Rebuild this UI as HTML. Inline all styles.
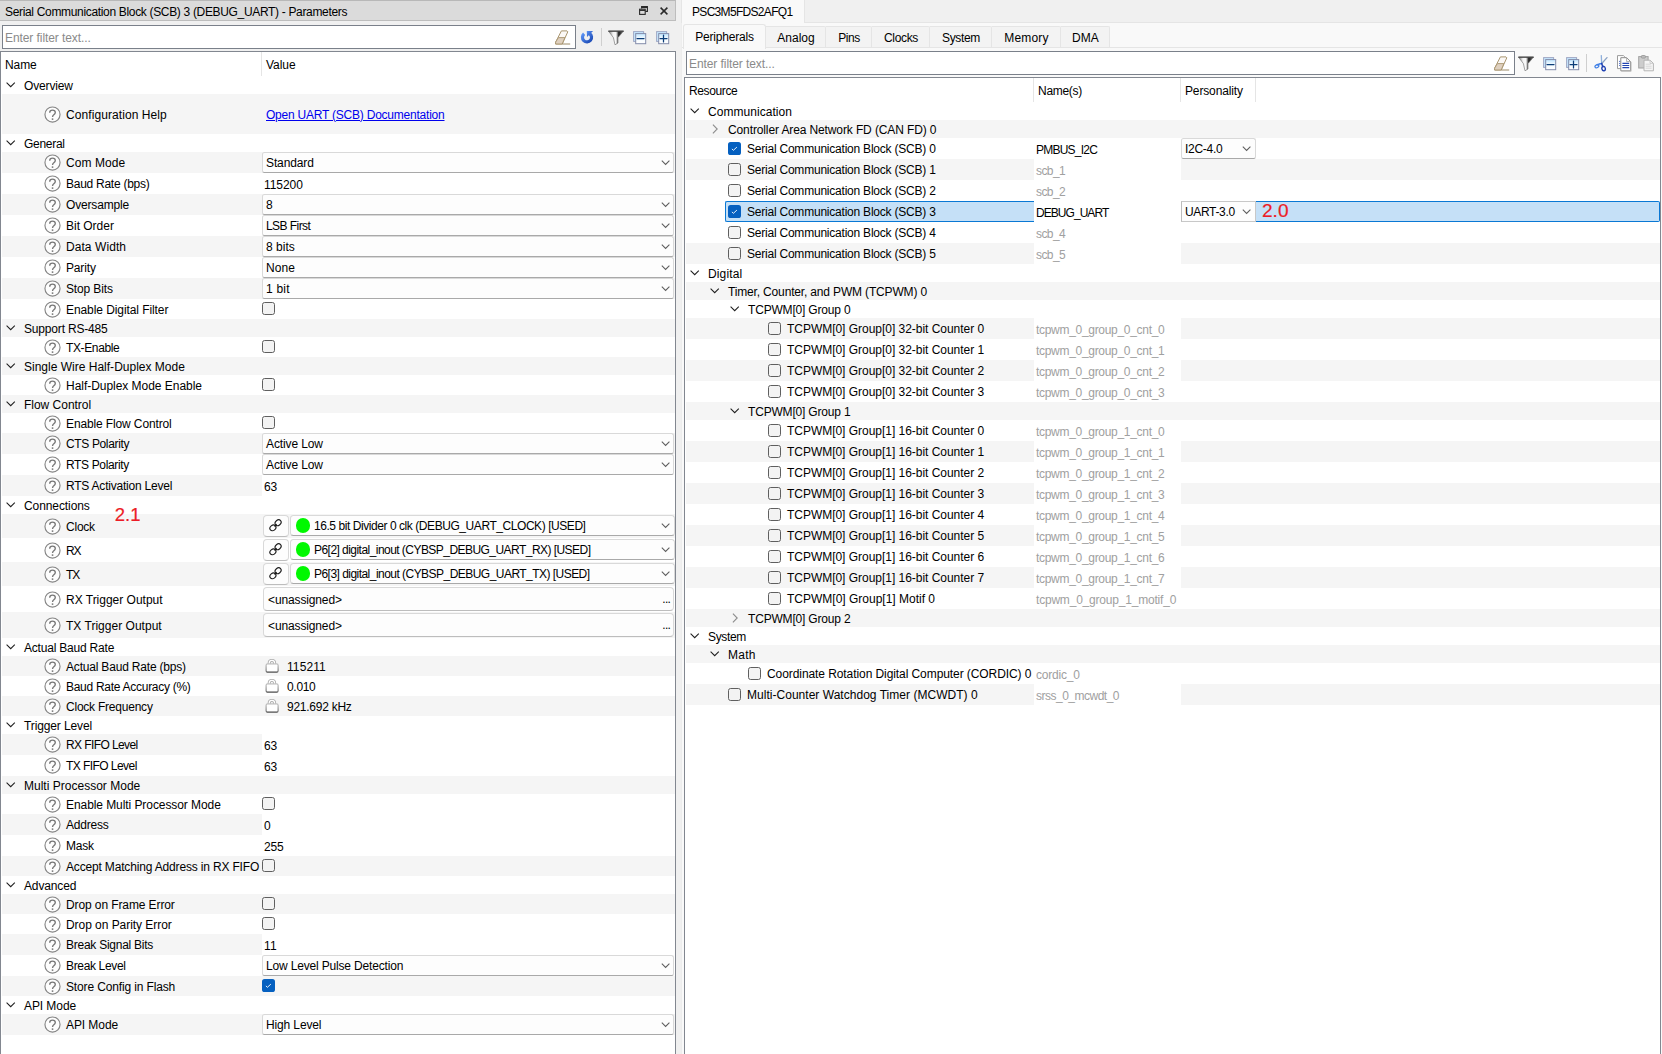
<!DOCTYPE html>
<html><head><meta charset="utf-8"><title>Device Configurator</title>
<style>
html,body{margin:0;padding:0}
body{width:1662px;height:1054px;overflow:hidden;background:#f0f0f0;font-family:"Liberation Sans",sans-serif;font-size:12px;color:#000;position:relative}
div,span,svg,a{position:absolute;box-sizing:border-box}
span span,a span,.t span{position:static}
.t{white-space:nowrap;line-height:16px;height:16px;margin-top:1px}
.g{color:#a0a0a0}
.ann{white-space:nowrap;font-size:18.5px;line-height:22px;height:22px;color:#ec1c26;transform-origin:0 0;-webkit-text-stroke:0.2px #ec1c26}
.ic{display:block}
.row{left:0;right:0}
.combo{background:#fdfdfd;border:1px solid #d9d9d9;border-bottom-color:#a9a9a9;border-radius:2.5px}
.btn{background:#fdfdfd;border:1px solid #d9d9d9;border-bottom-color:#bdbdbd;border-radius:4px}
.tree{background:#fff;border:1px solid #828790;overflow:hidden}
.inp{background:#fff;border:1px solid #7a808a}
.sep{width:1px;background:#e5e5e5}
a{color:#0000ee;text-decoration:underline}
</style></head><body>

<div style="left:0;top:0;width:676px;height:21px;background:#dbdbdb;border:1px solid #bdbdbd;border-top-color:#b8b8b8;border-left:none"></div>
<div class="t" style="left:5px;top:3px"><span style="letter-spacing:-0.329px;">Serial Communication Block (SCB) 3 (DEBUG_UART) - Parameters</span></div>
<svg class="ic" style="left:639px;top:6px" width="9" height="9" viewBox="0 0 9 9"><g fill="none" stroke="#2a2a2a" stroke-width="1.1"><path d="M2.6 2.6 V0.6 H8.4 V5.4 H6.4"/><path d="M2.6 1.5 H8.4"/><rect x="0.6" y="3.2" width="5.6" height="5.2"/><path d="M0.6 4.4 H6.2"/></g></svg>
<svg class="ic" style="left:660px;top:7px" width="8" height="8" viewBox="0 0 8 8"><path d="M0.6 0.6 L7.4 7.4 M7.4 0.6 L0.6 7.4" stroke="#2a2a2a" stroke-width="1.5" fill="none"/></svg>
<div class="inp" style="left:2px;top:25px;width:574px;height:24px"></div>
<div class="t" style="left:5px;top:29px;color:#8a8a8a"><span style="letter-spacing:-0.080px;">Enter filter text...</span></div>
<svg class="ic" style="left:555px;top:29.5px" width="16" height="15" viewBox="0 0 16 15"><path d="M6.4 0.9 H12 L12.8 1.8 L7.2 14 H0.6 V12.2 Z" fill="#fbf8f5" stroke="#a8946e" stroke-width="1"/><path d="M3.4 7.6 H9.9 L7.2 14 H0.6 V12.2 Z" fill="#dfd0bf" stroke="#a8946e" stroke-width="0.9"/><path d="M7.2 14 H15.2" stroke="#9c8a66" stroke-width="1"/></svg>
<svg class="ic" style="left:580px;top:30px" width="14" height="14" viewBox="0 0 14 14"><defs><linearGradient id="rg580" x1="0" y1="0" x2="1" y2="1"><stop offset="0" stop-color="#5b93f4"/><stop offset="1" stop-color="#1a48b4"/></linearGradient></defs><path d="M4.08 3.81 A4.55 4.55 0 1 0 9.61 3.57" fill="none" stroke="url(#rg580)" stroke-width="3.2"/><path d="M6.8 1.1 H13.1 L7.0 6.9 Z" fill="url(#rg580)"/></svg>
<div style="left:601px;top:28px;width:1px;height:18px;background:#cfcfcf"></div>
<svg class="ic" style="left:608px;top:30px" width="16" height="15" viewBox="0 0 16 15"><defs><linearGradient id="fg608" x1="0" x2="1"><stop offset="0" stop-color="#6e6e6e"/><stop offset="0.3" stop-color="#f4f4f4"/><stop offset="0.5" stop-color="#fafafa"/><stop offset="0.68" stop-color="#1e1e1e"/><stop offset="1" stop-color="#777"/></linearGradient></defs><path d="M0.4 1.0 H15.6 L10 7.6 V13 L7 14.8 L5.4 7.6 Z" fill="url(#fg608)" stroke="#6a6a6a" stroke-width="0.6"/><path d="M0.4 1.2 H15.6" stroke="#444" stroke-width="1.2"/></svg>
<svg class="ic" style="left:633px;top:30.6px" width="14" height="14" viewBox="0 0 14 14"><defs><linearGradient id="cg633" x1="0" y1="0" x2="0" y2="1"><stop offset="0" stop-color="#bfe5ff"/><stop offset="0.45" stop-color="#f2faff"/><stop offset="1" stop-color="#ffffff"/></linearGradient></defs><rect x="0.6" y="0.6" width="10" height="9.8" fill="#c6e7ff" stroke="#a0a8c4" stroke-width="1"/><rect x="2.7" y="2.6" width="10" height="10.1" fill="url(#cg633)" stroke="#838cab" stroke-width="1"/><path d="M4 7.5 H11" stroke="#0b3d78" stroke-width="1.25" stroke-linecap="round"/></svg>
<svg class="ic" style="left:656px;top:30.6px" width="14" height="14" viewBox="0 0 14 14"><defs><linearGradient id="cg656" x1="0" y1="0" x2="0" y2="1"><stop offset="0" stop-color="#bfe5ff"/><stop offset="0.45" stop-color="#f2faff"/><stop offset="1" stop-color="#ffffff"/></linearGradient></defs><rect x="0.6" y="0.6" width="10" height="9.8" fill="#c6e7ff" stroke="#a0a8c4" stroke-width="1"/><rect x="2.7" y="2.6" width="10" height="10.1" fill="url(#cg656)" stroke="#838cab" stroke-width="1"/><path d="M4 7.5 H11" stroke="#0b3d78" stroke-width="1.25" stroke-linecap="round"/><path d="M7.5 4.1 V10.9" stroke="#0b3d78" stroke-width="1.25" stroke-linecap="round"/></svg>
<div class="tree" style="left:0;top:51px;width:676px;height:1010px;border-left-color:#828790"></div>
<div class="t" style="left:5px;top:56px"><span style="letter-spacing:-0.082px;">Name</span></div>
<div class="t" style="left:266px;top:56px"><span style="letter-spacing:-0.054px;">Value</span></div>
<div class="sep" style="left:261px;top:52px;height:24px"></div>
<svg class="ic" style="left:6px;top:82.3px" width="10" height="6" viewBox="0 0 10 6"><path d="M0.6 0.6 L4.7 4.7 L8.8 0.6" fill="none" stroke="#1f1f1f" stroke-width="1.05"/></svg>
<div class="t" style="left:24px;top:76.5px"><span style="letter-spacing:-0.146px;">Overview</span></div>
<div style="left:2px;top:94px;width:673px;height:40px;background:#f5f5f5"></div>
<svg class="ic" style="left:43.5px;top:105.5px" width="17" height="17" viewBox="0 0 17 17"><circle cx="8.5" cy="8.5" r="7.55" fill="#fdfdfd" stroke="#858585" stroke-width="1.15"/><path d="M5.7 6.7 C5.7 5.1 6.9 4.15 8.5 4.15 C10.1 4.15 11.3 5.05 11.3 6.45 C11.3 7.55 10.6 8.1 9.8 8.75 C9 9.4 8.55 9.85 8.55 11.1" fill="none" stroke="#787878" stroke-width="1.35"/><circle cx="8.55" cy="13.1" r="0.95" fill="#787878"/></svg>
<div class="t" style="left:66px;top:105.5px"><span style="letter-spacing:0.081px;">Configuration Help</span></div>
<a class="t" style="left:266px;top:105.5px"><span style="letter-spacing:-0.223px;">Open UART (SCB) Documentation</span></a>
<svg class="ic" style="left:6px;top:140.3px" width="10" height="6" viewBox="0 0 10 6"><path d="M0.6 0.6 L4.7 4.7 L8.8 0.6" fill="none" stroke="#1f1f1f" stroke-width="1.05"/></svg>
<div class="t" style="left:24px;top:134.5px"><span style="letter-spacing:-0.277px;">General</span></div>
<div style="left:2px;top:152px;width:673px;height:21px;background:#f5f5f5"></div>
<svg class="ic" style="left:43.5px;top:154.0px" width="17" height="17" viewBox="0 0 17 17"><circle cx="8.5" cy="8.5" r="7.55" fill="#fdfdfd" stroke="#858585" stroke-width="1.15"/><path d="M5.7 6.7 C5.7 5.1 6.9 4.15 8.5 4.15 C10.1 4.15 11.3 5.05 11.3 6.45 C11.3 7.55 10.6 8.1 9.8 8.75 C9 9.4 8.55 9.85 8.55 11.1" fill="none" stroke="#787878" stroke-width="1.35"/><circle cx="8.55" cy="13.1" r="0.95" fill="#787878"/></svg>
<div class="t" style="left:66px;top:154.0px"><span style="letter-spacing:0.065px;">Com Mode</span></div>
<div class="combo" style="left:262px;top:152px;width:412px;height:21px"></div>
<div class="t" style="left:266px;top:154.0px"><span style="letter-spacing:-0.122px;">Standard</span></div>
<svg class="ic" style="left:661.4px;top:160.4px" width="10" height="6" viewBox="0 0 10 6"><path d="M0.8 0.6 L4.6 4.4 L8.4 0.6" fill="none" stroke="#5e5e5e" stroke-width="1.05"/></svg>
<svg class="ic" style="left:43.5px;top:175.0px" width="17" height="17" viewBox="0 0 17 17"><circle cx="8.5" cy="8.5" r="7.55" fill="#fdfdfd" stroke="#858585" stroke-width="1.15"/><path d="M5.7 6.7 C5.7 5.1 6.9 4.15 8.5 4.15 C10.1 4.15 11.3 5.05 11.3 6.45 C11.3 7.55 10.6 8.1 9.8 8.75 C9 9.4 8.55 9.85 8.55 11.1" fill="none" stroke="#787878" stroke-width="1.35"/><circle cx="8.55" cy="13.1" r="0.95" fill="#787878"/></svg>
<div class="t" style="left:66px;top:175.0px"><span style="letter-spacing:-0.261px;">Baud Rate (bps)</span></div>
<div style="left:262px;top:173px;width:413px;height:21px;background:#fff"></div>
<div class="t" style="left:264px;top:176.0px"><span style="letter-spacing:-0.057px;">115200</span></div>
<div style="left:2px;top:194px;width:673px;height:21px;background:#f5f5f5"></div>
<svg class="ic" style="left:43.5px;top:196.0px" width="17" height="17" viewBox="0 0 17 17"><circle cx="8.5" cy="8.5" r="7.55" fill="#fdfdfd" stroke="#858585" stroke-width="1.15"/><path d="M5.7 6.7 C5.7 5.1 6.9 4.15 8.5 4.15 C10.1 4.15 11.3 5.05 11.3 6.45 C11.3 7.55 10.6 8.1 9.8 8.75 C9 9.4 8.55 9.85 8.55 11.1" fill="none" stroke="#787878" stroke-width="1.35"/><circle cx="8.55" cy="13.1" r="0.95" fill="#787878"/></svg>
<div class="t" style="left:66px;top:196.0px"><span style="letter-spacing:-0.169px;">Oversample</span></div>
<div class="combo" style="left:262px;top:194px;width:412px;height:21px"></div>
<div class="t" style="left:266px;top:196.0px"><span style="letter-spacing:-0.206px;">8</span></div>
<svg class="ic" style="left:661.4px;top:202.4px" width="10" height="6" viewBox="0 0 10 6"><path d="M0.8 0.6 L4.6 4.4 L8.4 0.6" fill="none" stroke="#5e5e5e" stroke-width="1.05"/></svg>
<svg class="ic" style="left:43.5px;top:217.0px" width="17" height="17" viewBox="0 0 17 17"><circle cx="8.5" cy="8.5" r="7.55" fill="#fdfdfd" stroke="#858585" stroke-width="1.15"/><path d="M5.7 6.7 C5.7 5.1 6.9 4.15 8.5 4.15 C10.1 4.15 11.3 5.05 11.3 6.45 C11.3 7.55 10.6 8.1 9.8 8.75 C9 9.4 8.55 9.85 8.55 11.1" fill="none" stroke="#787878" stroke-width="1.35"/><circle cx="8.55" cy="13.1" r="0.95" fill="#787878"/></svg>
<div class="t" style="left:66px;top:217.0px"><span style="letter-spacing:-0.016px;">Bit Order</span></div>
<div class="combo" style="left:262px;top:215px;width:412px;height:21px"></div>
<div class="t" style="left:266px;top:217.0px"><span style="letter-spacing:-0.562px;">LSB First</span></div>
<svg class="ic" style="left:661.4px;top:223.4px" width="10" height="6" viewBox="0 0 10 6"><path d="M0.8 0.6 L4.6 4.4 L8.4 0.6" fill="none" stroke="#5e5e5e" stroke-width="1.05"/></svg>
<div style="left:2px;top:236px;width:673px;height:21px;background:#f5f5f5"></div>
<svg class="ic" style="left:43.5px;top:238.0px" width="17" height="17" viewBox="0 0 17 17"><circle cx="8.5" cy="8.5" r="7.55" fill="#fdfdfd" stroke="#858585" stroke-width="1.15"/><path d="M5.7 6.7 C5.7 5.1 6.9 4.15 8.5 4.15 C10.1 4.15 11.3 5.05 11.3 6.45 C11.3 7.55 10.6 8.1 9.8 8.75 C9 9.4 8.55 9.85 8.55 11.1" fill="none" stroke="#787878" stroke-width="1.35"/><circle cx="8.55" cy="13.1" r="0.95" fill="#787878"/></svg>
<div class="t" style="left:66px;top:238.0px"><span style="letter-spacing:0.067px;">Data Width</span></div>
<div class="combo" style="left:262px;top:236px;width:412px;height:21px"></div>
<div class="t" style="left:266px;top:238.0px"><span style="letter-spacing:0.032px;">8 bits</span></div>
<svg class="ic" style="left:661.4px;top:244.4px" width="10" height="6" viewBox="0 0 10 6"><path d="M0.8 0.6 L4.6 4.4 L8.4 0.6" fill="none" stroke="#5e5e5e" stroke-width="1.05"/></svg>
<svg class="ic" style="left:43.5px;top:259.0px" width="17" height="17" viewBox="0 0 17 17"><circle cx="8.5" cy="8.5" r="7.55" fill="#fdfdfd" stroke="#858585" stroke-width="1.15"/><path d="M5.7 6.7 C5.7 5.1 6.9 4.15 8.5 4.15 C10.1 4.15 11.3 5.05 11.3 6.45 C11.3 7.55 10.6 8.1 9.8 8.75 C9 9.4 8.55 9.85 8.55 11.1" fill="none" stroke="#787878" stroke-width="1.35"/><circle cx="8.55" cy="13.1" r="0.95" fill="#787878"/></svg>
<div class="t" style="left:66px;top:259.0px"><span style="letter-spacing:-0.154px;">Parity</span></div>
<div class="combo" style="left:262px;top:257px;width:412px;height:21px"></div>
<div class="t" style="left:266px;top:259.0px"><span style="letter-spacing:0.094px;">None</span></div>
<svg class="ic" style="left:661.4px;top:265.4px" width="10" height="6" viewBox="0 0 10 6"><path d="M0.8 0.6 L4.6 4.4 L8.4 0.6" fill="none" stroke="#5e5e5e" stroke-width="1.05"/></svg>
<div style="left:2px;top:278px;width:673px;height:21px;background:#f5f5f5"></div>
<svg class="ic" style="left:43.5px;top:280.0px" width="17" height="17" viewBox="0 0 17 17"><circle cx="8.5" cy="8.5" r="7.55" fill="#fdfdfd" stroke="#858585" stroke-width="1.15"/><path d="M5.7 6.7 C5.7 5.1 6.9 4.15 8.5 4.15 C10.1 4.15 11.3 5.05 11.3 6.45 C11.3 7.55 10.6 8.1 9.8 8.75 C9 9.4 8.55 9.85 8.55 11.1" fill="none" stroke="#787878" stroke-width="1.35"/><circle cx="8.55" cy="13.1" r="0.95" fill="#787878"/></svg>
<div class="t" style="left:66px;top:280.0px"><span style="letter-spacing:-0.141px;">Stop Bits</span></div>
<div class="combo" style="left:262px;top:278px;width:412px;height:21px"></div>
<div class="t" style="left:266px;top:280.0px"><span style="letter-spacing:0.220px;">1 bit</span></div>
<svg class="ic" style="left:661.4px;top:286.4px" width="10" height="6" viewBox="0 0 10 6"><path d="M0.8 0.6 L4.6 4.4 L8.4 0.6" fill="none" stroke="#5e5e5e" stroke-width="1.05"/></svg>
<svg class="ic" style="left:43.5px;top:300.5px" width="17" height="17" viewBox="0 0 17 17"><circle cx="8.5" cy="8.5" r="7.55" fill="#fdfdfd" stroke="#858585" stroke-width="1.15"/><path d="M5.7 6.7 C5.7 5.1 6.9 4.15 8.5 4.15 C10.1 4.15 11.3 5.05 11.3 6.45 C11.3 7.55 10.6 8.1 9.8 8.75 C9 9.4 8.55 9.85 8.55 11.1" fill="none" stroke="#787878" stroke-width="1.35"/><circle cx="8.55" cy="13.1" r="0.95" fill="#787878"/></svg>
<div class="t" style="left:66px;top:300.5px"><span style="letter-spacing:-0.082px;">Enable Digital Filter</span></div>
<svg class="ic" style="left:262px;top:302.0px" width="13" height="13" viewBox="0 0 13 13"><rect x="0.5" y="0.5" width="12" height="12" rx="2.1" fill="#f3f3f3" stroke="#5f5f5f" stroke-width="1"/></svg>
<div style="left:2px;top:319px;width:673px;height:18px;background:#f5f5f5"></div>
<svg class="ic" style="left:6px;top:325.3px" width="10" height="6" viewBox="0 0 10 6"><path d="M0.6 0.6 L4.7 4.7 L8.8 0.6" fill="none" stroke="#1f1f1f" stroke-width="1.05"/></svg>
<div class="t" style="left:24px;top:319.5px"><span style="letter-spacing:-0.177px;">Support RS-485</span></div>
<svg class="ic" style="left:43.5px;top:338.5px" width="17" height="17" viewBox="0 0 17 17"><circle cx="8.5" cy="8.5" r="7.55" fill="#fdfdfd" stroke="#858585" stroke-width="1.15"/><path d="M5.7 6.7 C5.7 5.1 6.9 4.15 8.5 4.15 C10.1 4.15 11.3 5.05 11.3 6.45 C11.3 7.55 10.6 8.1 9.8 8.75 C9 9.4 8.55 9.85 8.55 11.1" fill="none" stroke="#787878" stroke-width="1.35"/><circle cx="8.55" cy="13.1" r="0.95" fill="#787878"/></svg>
<div class="t" style="left:66px;top:338.5px"><span style="letter-spacing:-0.370px;">TX-Enable</span></div>
<svg class="ic" style="left:262px;top:340.0px" width="13" height="13" viewBox="0 0 13 13"><rect x="0.5" y="0.5" width="12" height="12" rx="2.1" fill="#f3f3f3" stroke="#5f5f5f" stroke-width="1"/></svg>
<div style="left:2px;top:357px;width:673px;height:18px;background:#f5f5f5"></div>
<svg class="ic" style="left:6px;top:363.3px" width="10" height="6" viewBox="0 0 10 6"><path d="M0.6 0.6 L4.7 4.7 L8.8 0.6" fill="none" stroke="#1f1f1f" stroke-width="1.05"/></svg>
<div class="t" style="left:24px;top:357.5px"><span style="letter-spacing:0.006px;">Single Wire Half-Duplex Mode</span></div>
<svg class="ic" style="left:43.5px;top:376.5px" width="17" height="17" viewBox="0 0 17 17"><circle cx="8.5" cy="8.5" r="7.55" fill="#fdfdfd" stroke="#858585" stroke-width="1.15"/><path d="M5.7 6.7 C5.7 5.1 6.9 4.15 8.5 4.15 C10.1 4.15 11.3 5.05 11.3 6.45 C11.3 7.55 10.6 8.1 9.8 8.75 C9 9.4 8.55 9.85 8.55 11.1" fill="none" stroke="#787878" stroke-width="1.35"/><circle cx="8.55" cy="13.1" r="0.95" fill="#787878"/></svg>
<div class="t" style="left:66px;top:376.5px"><span style="letter-spacing:-0.034px;">Half-Duplex Mode Enable</span></div>
<svg class="ic" style="left:262px;top:378.0px" width="13" height="13" viewBox="0 0 13 13"><rect x="0.5" y="0.5" width="12" height="12" rx="2.1" fill="#f3f3f3" stroke="#5f5f5f" stroke-width="1"/></svg>
<div style="left:2px;top:395px;width:673px;height:18px;background:#f5f5f5"></div>
<svg class="ic" style="left:6px;top:401.3px" width="10" height="6" viewBox="0 0 10 6"><path d="M0.6 0.6 L4.7 4.7 L8.8 0.6" fill="none" stroke="#1f1f1f" stroke-width="1.05"/></svg>
<div class="t" style="left:24px;top:395.5px"><span style="letter-spacing:-0.016px;">Flow Control</span></div>
<svg class="ic" style="left:43.5px;top:414.5px" width="17" height="17" viewBox="0 0 17 17"><circle cx="8.5" cy="8.5" r="7.55" fill="#fdfdfd" stroke="#858585" stroke-width="1.15"/><path d="M5.7 6.7 C5.7 5.1 6.9 4.15 8.5 4.15 C10.1 4.15 11.3 5.05 11.3 6.45 C11.3 7.55 10.6 8.1 9.8 8.75 C9 9.4 8.55 9.85 8.55 11.1" fill="none" stroke="#787878" stroke-width="1.35"/><circle cx="8.55" cy="13.1" r="0.95" fill="#787878"/></svg>
<div class="t" style="left:66px;top:414.5px"><span style="letter-spacing:-0.127px;">Enable Flow Control</span></div>
<svg class="ic" style="left:262px;top:416.0px" width="13" height="13" viewBox="0 0 13 13"><rect x="0.5" y="0.5" width="12" height="12" rx="2.1" fill="#f3f3f3" stroke="#5f5f5f" stroke-width="1"/></svg>
<div style="left:2px;top:433px;width:673px;height:21px;background:#f5f5f5"></div>
<svg class="ic" style="left:43.5px;top:435.0px" width="17" height="17" viewBox="0 0 17 17"><circle cx="8.5" cy="8.5" r="7.55" fill="#fdfdfd" stroke="#858585" stroke-width="1.15"/><path d="M5.7 6.7 C5.7 5.1 6.9 4.15 8.5 4.15 C10.1 4.15 11.3 5.05 11.3 6.45 C11.3 7.55 10.6 8.1 9.8 8.75 C9 9.4 8.55 9.85 8.55 11.1" fill="none" stroke="#787878" stroke-width="1.35"/><circle cx="8.55" cy="13.1" r="0.95" fill="#787878"/></svg>
<div class="t" style="left:66px;top:435.0px"><span style="letter-spacing:-0.357px;">CTS Polarity</span></div>
<div class="combo" style="left:262px;top:433px;width:412px;height:21px"></div>
<div class="t" style="left:266px;top:435.0px"><span style="letter-spacing:-0.111px;">Active Low</span></div>
<svg class="ic" style="left:661.4px;top:441.4px" width="10" height="6" viewBox="0 0 10 6"><path d="M0.8 0.6 L4.6 4.4 L8.4 0.6" fill="none" stroke="#5e5e5e" stroke-width="1.05"/></svg>
<svg class="ic" style="left:43.5px;top:456.0px" width="17" height="17" viewBox="0 0 17 17"><circle cx="8.5" cy="8.5" r="7.55" fill="#fdfdfd" stroke="#858585" stroke-width="1.15"/><path d="M5.7 6.7 C5.7 5.1 6.9 4.15 8.5 4.15 C10.1 4.15 11.3 5.05 11.3 6.45 C11.3 7.55 10.6 8.1 9.8 8.75 C9 9.4 8.55 9.85 8.55 11.1" fill="none" stroke="#787878" stroke-width="1.35"/><circle cx="8.55" cy="13.1" r="0.95" fill="#787878"/></svg>
<div class="t" style="left:66px;top:456.0px"><span style="letter-spacing:-0.360px;">RTS Polarity</span></div>
<div class="combo" style="left:262px;top:454px;width:412px;height:21px"></div>
<div class="t" style="left:266px;top:456.0px"><span style="letter-spacing:-0.111px;">Active Low</span></div>
<svg class="ic" style="left:661.4px;top:462.4px" width="10" height="6" viewBox="0 0 10 6"><path d="M0.8 0.6 L4.6 4.4 L8.4 0.6" fill="none" stroke="#5e5e5e" stroke-width="1.05"/></svg>
<div style="left:2px;top:475px;width:673px;height:21px;background:#f5f5f5"></div>
<svg class="ic" style="left:43.5px;top:477.0px" width="17" height="17" viewBox="0 0 17 17"><circle cx="8.5" cy="8.5" r="7.55" fill="#fdfdfd" stroke="#858585" stroke-width="1.15"/><path d="M5.7 6.7 C5.7 5.1 6.9 4.15 8.5 4.15 C10.1 4.15 11.3 5.05 11.3 6.45 C11.3 7.55 10.6 8.1 9.8 8.75 C9 9.4 8.55 9.85 8.55 11.1" fill="none" stroke="#787878" stroke-width="1.35"/><circle cx="8.55" cy="13.1" r="0.95" fill="#787878"/></svg>
<div class="t" style="left:66px;top:477.0px"><span style="letter-spacing:-0.217px;">RTS Activation Level</span></div>
<div style="left:262px;top:475px;width:413px;height:21px;background:#fff"></div>
<div class="t" style="left:264px;top:478.0px"><span style="letter-spacing:-0.206px;">63</span></div>
<svg class="ic" style="left:6px;top:502.3px" width="10" height="6" viewBox="0 0 10 6"><path d="M0.6 0.6 L4.7 4.7 L8.8 0.6" fill="none" stroke="#1f1f1f" stroke-width="1.05"/></svg>
<div class="t" style="left:24px;top:496.5px"><span style="letter-spacing:-0.091px;">Connections</span></div>
<div style="left:2px;top:514px;width:673px;height:24px;background:#f5f5f5"></div>
<svg class="ic" style="left:43.5px;top:517.5px" width="17" height="17" viewBox="0 0 17 17"><circle cx="8.5" cy="8.5" r="7.55" fill="#fdfdfd" stroke="#858585" stroke-width="1.15"/><path d="M5.7 6.7 C5.7 5.1 6.9 4.15 8.5 4.15 C10.1 4.15 11.3 5.05 11.3 6.45 C11.3 7.55 10.6 8.1 9.8 8.75 C9 9.4 8.55 9.85 8.55 11.1" fill="none" stroke="#787878" stroke-width="1.35"/><circle cx="8.55" cy="13.1" r="0.95" fill="#787878"/></svg>
<div class="t" style="left:66px;top:517.5px"><span style="letter-spacing:-0.227px;">Clock</span></div>
<div class="btn" style="left:263px;top:515px;width:26px;height:22px"></div>
<svg class="ic" style="left:268.6px;top:519.1px" width="13" height="13" viewBox="0 0 13 13"><g fill="none" stroke="#1c1c1c" stroke-width="1.15"><ellipse cx="9.1" cy="3.7" rx="3.2" ry="2.6" transform="rotate(-40 9.1 3.7)"/><ellipse cx="3.9" cy="8.9" rx="3.2" ry="2.6" transform="rotate(-40 3.9 8.9)"/><path d="M5.4 7.4 L7.6 5.2"/></g></svg>
<div class="combo" style="left:290px;top:515px;width:385px;height:21px;border-radius:3.5px"></div>
<div style="left:295.6px;top:517.9px;width:14.9px;height:14.9px;border-radius:8px;background:#00f800"></div>
<div class="t" style="left:314px;top:516.5px"><span style="letter-spacing:-0.438px;">16.5 bit Divider 0 clk (DEBUG_UART_CLOCK) [USED]</span></div>
<svg class="ic" style="left:661.4px;top:523.4px" width="10" height="6" viewBox="0 0 10 6"><path d="M0.8 0.6 L4.6 4.4 L8.4 0.6" fill="none" stroke="#5e5e5e" stroke-width="1.05"/></svg>
<svg class="ic" style="left:43.5px;top:541.5px" width="17" height="17" viewBox="0 0 17 17"><circle cx="8.5" cy="8.5" r="7.55" fill="#fdfdfd" stroke="#858585" stroke-width="1.15"/><path d="M5.7 6.7 C5.7 5.1 6.9 4.15 8.5 4.15 C10.1 4.15 11.3 5.05 11.3 6.45 C11.3 7.55 10.6 8.1 9.8 8.75 C9 9.4 8.55 9.85 8.55 11.1" fill="none" stroke="#787878" stroke-width="1.35"/><circle cx="8.55" cy="13.1" r="0.95" fill="#787878"/></svg>
<div class="t" style="left:66px;top:541.5px"><span style="letter-spacing:-1.207px;">RX</span></div>
<div class="btn" style="left:263px;top:539px;width:26px;height:22px"></div>
<svg class="ic" style="left:268.6px;top:543.1px" width="13" height="13" viewBox="0 0 13 13"><g fill="none" stroke="#1c1c1c" stroke-width="1.15"><ellipse cx="9.1" cy="3.7" rx="3.2" ry="2.6" transform="rotate(-40 9.1 3.7)"/><ellipse cx="3.9" cy="8.9" rx="3.2" ry="2.6" transform="rotate(-40 3.9 8.9)"/><path d="M5.4 7.4 L7.6 5.2"/></g></svg>
<div class="combo" style="left:290px;top:539px;width:385px;height:21px;border-radius:3.5px"></div>
<div style="left:295.6px;top:541.9px;width:14.9px;height:14.9px;border-radius:8px;background:#00f800"></div>
<div class="t" style="left:314px;top:540.5px"><span style="letter-spacing:-0.544px;">P6[2] digital_inout (CYBSP_DEBUG_UART_RX) [USED]</span></div>
<svg class="ic" style="left:661.4px;top:547.4px" width="10" height="6" viewBox="0 0 10 6"><path d="M0.8 0.6 L4.6 4.4 L8.4 0.6" fill="none" stroke="#5e5e5e" stroke-width="1.05"/></svg>
<div style="left:2px;top:562px;width:673px;height:24px;background:#f5f5f5"></div>
<svg class="ic" style="left:43.5px;top:565.5px" width="17" height="17" viewBox="0 0 17 17"><circle cx="8.5" cy="8.5" r="7.55" fill="#fdfdfd" stroke="#858585" stroke-width="1.15"/><path d="M5.7 6.7 C5.7 5.1 6.9 4.15 8.5 4.15 C10.1 4.15 11.3 5.05 11.3 6.45 C11.3 7.55 10.6 8.1 9.8 8.75 C9 9.4 8.55 9.85 8.55 11.1" fill="none" stroke="#787878" stroke-width="1.35"/><circle cx="8.55" cy="13.1" r="0.95" fill="#787878"/></svg>
<div class="t" style="left:66px;top:565.5px"><span style="letter-spacing:-0.983px;">TX</span></div>
<div class="btn" style="left:263px;top:563px;width:26px;height:22px"></div>
<svg class="ic" style="left:268.6px;top:567.1px" width="13" height="13" viewBox="0 0 13 13"><g fill="none" stroke="#1c1c1c" stroke-width="1.15"><ellipse cx="9.1" cy="3.7" rx="3.2" ry="2.6" transform="rotate(-40 9.1 3.7)"/><ellipse cx="3.9" cy="8.9" rx="3.2" ry="2.6" transform="rotate(-40 3.9 8.9)"/><path d="M5.4 7.4 L7.6 5.2"/></g></svg>
<div class="combo" style="left:290px;top:563px;width:385px;height:21px;border-radius:3.5px"></div>
<div style="left:295.6px;top:565.9px;width:14.9px;height:14.9px;border-radius:8px;background:#00f800"></div>
<div class="t" style="left:314px;top:564.5px"><span style="letter-spacing:-0.535px;">P6[3] digital_inout (CYBSP_DEBUG_UART_TX) [USED]</span></div>
<svg class="ic" style="left:661.4px;top:571.4px" width="10" height="6" viewBox="0 0 10 6"><path d="M0.8 0.6 L4.6 4.4 L8.4 0.6" fill="none" stroke="#5e5e5e" stroke-width="1.05"/></svg>
<svg class="ic" style="left:43.5px;top:590.5px" width="17" height="17" viewBox="0 0 17 17"><circle cx="8.5" cy="8.5" r="7.55" fill="#fdfdfd" stroke="#858585" stroke-width="1.15"/><path d="M5.7 6.7 C5.7 5.1 6.9 4.15 8.5 4.15 C10.1 4.15 11.3 5.05 11.3 6.45 C11.3 7.55 10.6 8.1 9.8 8.75 C9 9.4 8.55 9.85 8.55 11.1" fill="none" stroke="#787878" stroke-width="1.35"/><circle cx="8.55" cy="13.1" r="0.95" fill="#787878"/></svg>
<div class="t" style="left:66px;top:590.5px"><span style="letter-spacing:-0.009px;">RX Trigger Output</span></div>
<div class="btn" style="left:263px;top:587px;width:411px;height:24px"></div>
<div class="t" style="left:268px;top:590.5px"><span style="letter-spacing:-0.130px;">&lt;unassigned&gt;</span></div>
<div class="t" style="left:662.3px;top:590.2px"><span style="letter-spacing:-0.730px;">...</span></div>
<div style="left:2px;top:612px;width:673px;height:26px;background:#f5f5f5"></div>
<svg class="ic" style="left:43.5px;top:616.5px" width="17" height="17" viewBox="0 0 17 17"><circle cx="8.5" cy="8.5" r="7.55" fill="#fdfdfd" stroke="#858585" stroke-width="1.15"/><path d="M5.7 6.7 C5.7 5.1 6.9 4.15 8.5 4.15 C10.1 4.15 11.3 5.05 11.3 6.45 C11.3 7.55 10.6 8.1 9.8 8.75 C9 9.4 8.55 9.85 8.55 11.1" fill="none" stroke="#787878" stroke-width="1.35"/><circle cx="8.55" cy="13.1" r="0.95" fill="#787878"/></svg>
<div class="t" style="left:66px;top:616.5px"><span style="letter-spacing:0.018px;">TX Trigger Output</span></div>
<div class="btn" style="left:263px;top:613px;width:411px;height:24px"></div>
<div class="t" style="left:268px;top:616.5px"><span style="letter-spacing:-0.130px;">&lt;unassigned&gt;</span></div>
<div class="t" style="left:662.3px;top:616.2px"><span style="letter-spacing:-0.730px;">...</span></div>
<svg class="ic" style="left:6px;top:644.3px" width="10" height="6" viewBox="0 0 10 6"><path d="M0.6 0.6 L4.7 4.7 L8.8 0.6" fill="none" stroke="#1f1f1f" stroke-width="1.05"/></svg>
<div class="t" style="left:24px;top:638.5px"><span style="letter-spacing:-0.202px;">Actual Baud Rate</span></div>
<div style="left:2px;top:656px;width:673px;height:20px;background:#f5f5f5"></div>
<svg class="ic" style="left:43.5px;top:657.5px" width="17" height="17" viewBox="0 0 17 17"><circle cx="8.5" cy="8.5" r="7.55" fill="#fdfdfd" stroke="#858585" stroke-width="1.15"/><path d="M5.7 6.7 C5.7 5.1 6.9 4.15 8.5 4.15 C10.1 4.15 11.3 5.05 11.3 6.45 C11.3 7.55 10.6 8.1 9.8 8.75 C9 9.4 8.55 9.85 8.55 11.1" fill="none" stroke="#787878" stroke-width="1.35"/><circle cx="8.55" cy="13.1" r="0.95" fill="#787878"/></svg>
<div class="t" style="left:66px;top:657.5px"><span style="letter-spacing:-0.189px;">Actual Baud Rate (bps)</span></div>
<svg class="ic" style="left:265.3px;top:658.2px" width="14" height="15" viewBox="0 0 14 15"><defs><linearGradient id="lk665" x1="0" y1="0" x2="0" y2="1"><stop offset="0" stop-color="#c2c2c2"/><stop offset="1" stop-color="#6a6a6a"/></linearGradient></defs><path d="M4.2 6 V4.9 C4.2 3.3 5.3 2.4 6.9 2.4 C8.5 2.4 9.6 3.3 9.6 4.9 V6" fill="none" stroke="#a9a9a9" stroke-width="3"/><path d="M4.2 6.4 V4.9 C4.2 3.3 5.3 2.4 6.9 2.4 C8.5 2.4 9.6 3.3 9.6 4.9 V6.4" fill="none" stroke="#fff" stroke-width="1.3"/><rect x="1.1" y="5.9" width="12" height="8.2" rx="1.3" fill="#fff" stroke="url(#lk665)" stroke-width="1.1"/><path d="M1.6 14.2 H12.4" stroke="#6e6e6e" stroke-width="0.9"/></svg>
<div class="t" style="left:287px;top:658.0px"><span style="letter-spacing:0.091px;">115211</span></div>
<svg class="ic" style="left:43.5px;top:677.5px" width="17" height="17" viewBox="0 0 17 17"><circle cx="8.5" cy="8.5" r="7.55" fill="#fdfdfd" stroke="#858585" stroke-width="1.15"/><path d="M5.7 6.7 C5.7 5.1 6.9 4.15 8.5 4.15 C10.1 4.15 11.3 5.05 11.3 6.45 C11.3 7.55 10.6 8.1 9.8 8.75 C9 9.4 8.55 9.85 8.55 11.1" fill="none" stroke="#787878" stroke-width="1.35"/><circle cx="8.55" cy="13.1" r="0.95" fill="#787878"/></svg>
<div class="t" style="left:66px;top:677.5px"><span style="letter-spacing:-0.279px;">Baud Rate Accuracy (%)</span></div>
<svg class="ic" style="left:265.3px;top:678.2px" width="14" height="15" viewBox="0 0 14 15"><defs><linearGradient id="lk685" x1="0" y1="0" x2="0" y2="1"><stop offset="0" stop-color="#c2c2c2"/><stop offset="1" stop-color="#6a6a6a"/></linearGradient></defs><path d="M4.2 6 V4.9 C4.2 3.3 5.3 2.4 6.9 2.4 C8.5 2.4 9.6 3.3 9.6 4.9 V6" fill="none" stroke="#a9a9a9" stroke-width="3"/><path d="M4.2 6.4 V4.9 C4.2 3.3 5.3 2.4 6.9 2.4 C8.5 2.4 9.6 3.3 9.6 4.9 V6.4" fill="none" stroke="#fff" stroke-width="1.3"/><rect x="1.1" y="5.9" width="12" height="8.2" rx="1.3" fill="#fff" stroke="url(#lk685)" stroke-width="1.1"/><path d="M1.6 14.2 H12.4" stroke="#6e6e6e" stroke-width="0.9"/></svg>
<div class="t" style="left:287px;top:678.0px"><span style="letter-spacing:-0.311px;">0.010</span></div>
<div style="left:2px;top:696px;width:673px;height:20px;background:#f5f5f5"></div>
<svg class="ic" style="left:43.5px;top:697.5px" width="17" height="17" viewBox="0 0 17 17"><circle cx="8.5" cy="8.5" r="7.55" fill="#fdfdfd" stroke="#858585" stroke-width="1.15"/><path d="M5.7 6.7 C5.7 5.1 6.9 4.15 8.5 4.15 C10.1 4.15 11.3 5.05 11.3 6.45 C11.3 7.55 10.6 8.1 9.8 8.75 C9 9.4 8.55 9.85 8.55 11.1" fill="none" stroke="#787878" stroke-width="1.35"/><circle cx="8.55" cy="13.1" r="0.95" fill="#787878"/></svg>
<div class="t" style="left:66px;top:697.5px"><span style="letter-spacing:-0.224px;">Clock Frequency</span></div>
<svg class="ic" style="left:265.3px;top:698.2px" width="14" height="15" viewBox="0 0 14 15"><defs><linearGradient id="lk705" x1="0" y1="0" x2="0" y2="1"><stop offset="0" stop-color="#c2c2c2"/><stop offset="1" stop-color="#6a6a6a"/></linearGradient></defs><path d="M4.2 6 V4.9 C4.2 3.3 5.3 2.4 6.9 2.4 C8.5 2.4 9.6 3.3 9.6 4.9 V6" fill="none" stroke="#a9a9a9" stroke-width="3"/><path d="M4.2 6.4 V4.9 C4.2 3.3 5.3 2.4 6.9 2.4 C8.5 2.4 9.6 3.3 9.6 4.9 V6.4" fill="none" stroke="#fff" stroke-width="1.3"/><rect x="1.1" y="5.9" width="12" height="8.2" rx="1.3" fill="#fff" stroke="url(#lk705)" stroke-width="1.1"/><path d="M1.6 14.2 H12.4" stroke="#6e6e6e" stroke-width="0.9"/></svg>
<div class="t" style="left:287px;top:698.0px"><span style="letter-spacing:-0.251px;">921.692 kHz</span></div>
<svg class="ic" style="left:6px;top:722.3px" width="10" height="6" viewBox="0 0 10 6"><path d="M0.6 0.6 L4.7 4.7 L8.8 0.6" fill="none" stroke="#1f1f1f" stroke-width="1.05"/></svg>
<div class="t" style="left:24px;top:716.5px"><span style="letter-spacing:-0.116px;">Trigger Level</span></div>
<div style="left:2px;top:734px;width:673px;height:21px;background:#f5f5f5"></div>
<svg class="ic" style="left:43.5px;top:736.0px" width="17" height="17" viewBox="0 0 17 17"><circle cx="8.5" cy="8.5" r="7.55" fill="#fdfdfd" stroke="#858585" stroke-width="1.15"/><path d="M5.7 6.7 C5.7 5.1 6.9 4.15 8.5 4.15 C10.1 4.15 11.3 5.05 11.3 6.45 C11.3 7.55 10.6 8.1 9.8 8.75 C9 9.4 8.55 9.85 8.55 11.1" fill="none" stroke="#787878" stroke-width="1.35"/><circle cx="8.55" cy="13.1" r="0.95" fill="#787878"/></svg>
<div class="t" style="left:66px;top:736.0px"><span style="letter-spacing:-0.593px;">RX FIFO Level</span></div>
<div style="left:262px;top:734px;width:413px;height:21px;background:#fff"></div>
<div class="t" style="left:264px;top:737.0px"><span style="letter-spacing:-0.206px;">63</span></div>
<svg class="ic" style="left:43.5px;top:757.0px" width="17" height="17" viewBox="0 0 17 17"><circle cx="8.5" cy="8.5" r="7.55" fill="#fdfdfd" stroke="#858585" stroke-width="1.15"/><path d="M5.7 6.7 C5.7 5.1 6.9 4.15 8.5 4.15 C10.1 4.15 11.3 5.05 11.3 6.45 C11.3 7.55 10.6 8.1 9.8 8.75 C9 9.4 8.55 9.85 8.55 11.1" fill="none" stroke="#787878" stroke-width="1.35"/><circle cx="8.55" cy="13.1" r="0.95" fill="#787878"/></svg>
<div class="t" style="left:66px;top:757.0px"><span style="letter-spacing:-0.559px;">TX FIFO Level</span></div>
<div style="left:262px;top:755px;width:413px;height:21px;background:#fff"></div>
<div class="t" style="left:264px;top:758.0px"><span style="letter-spacing:-0.206px;">63</span></div>
<div style="left:2px;top:776px;width:673px;height:18px;background:#f5f5f5"></div>
<svg class="ic" style="left:6px;top:782.3px" width="10" height="6" viewBox="0 0 10 6"><path d="M0.6 0.6 L4.7 4.7 L8.8 0.6" fill="none" stroke="#1f1f1f" stroke-width="1.05"/></svg>
<div class="t" style="left:24px;top:776.5px"><span style="letter-spacing:0.012px;">Multi Processor Mode</span></div>
<svg class="ic" style="left:43.5px;top:795.5px" width="17" height="17" viewBox="0 0 17 17"><circle cx="8.5" cy="8.5" r="7.55" fill="#fdfdfd" stroke="#858585" stroke-width="1.15"/><path d="M5.7 6.7 C5.7 5.1 6.9 4.15 8.5 4.15 C10.1 4.15 11.3 5.05 11.3 6.45 C11.3 7.55 10.6 8.1 9.8 8.75 C9 9.4 8.55 9.85 8.55 11.1" fill="none" stroke="#787878" stroke-width="1.35"/><circle cx="8.55" cy="13.1" r="0.95" fill="#787878"/></svg>
<div class="t" style="left:66px;top:795.5px"><span style="letter-spacing:-0.073px;">Enable Multi Processor Mode</span></div>
<svg class="ic" style="left:262px;top:797.0px" width="13" height="13" viewBox="0 0 13 13"><rect x="0.5" y="0.5" width="12" height="12" rx="2.1" fill="#f3f3f3" stroke="#5f5f5f" stroke-width="1"/></svg>
<div style="left:2px;top:814px;width:673px;height:21px;background:#f5f5f5"></div>
<svg class="ic" style="left:43.5px;top:816.0px" width="17" height="17" viewBox="0 0 17 17"><circle cx="8.5" cy="8.5" r="7.55" fill="#fdfdfd" stroke="#858585" stroke-width="1.15"/><path d="M5.7 6.7 C5.7 5.1 6.9 4.15 8.5 4.15 C10.1 4.15 11.3 5.05 11.3 6.45 C11.3 7.55 10.6 8.1 9.8 8.75 C9 9.4 8.55 9.85 8.55 11.1" fill="none" stroke="#787878" stroke-width="1.35"/><circle cx="8.55" cy="13.1" r="0.95" fill="#787878"/></svg>
<div class="t" style="left:66px;top:816.0px"><span style="letter-spacing:-0.220px;">Address</span></div>
<div style="left:262px;top:814px;width:413px;height:21px;background:#fff"></div>
<div class="t" style="left:264px;top:817.0px"><span style="letter-spacing:-0.206px;">0</span></div>
<svg class="ic" style="left:43.5px;top:837.0px" width="17" height="17" viewBox="0 0 17 17"><circle cx="8.5" cy="8.5" r="7.55" fill="#fdfdfd" stroke="#858585" stroke-width="1.15"/><path d="M5.7 6.7 C5.7 5.1 6.9 4.15 8.5 4.15 C10.1 4.15 11.3 5.05 11.3 6.45 C11.3 7.55 10.6 8.1 9.8 8.75 C9 9.4 8.55 9.85 8.55 11.1" fill="none" stroke="#787878" stroke-width="1.35"/><circle cx="8.55" cy="13.1" r="0.95" fill="#787878"/></svg>
<div class="t" style="left:66px;top:837.0px"><span style="letter-spacing:-0.184px;">Mask</span></div>
<div style="left:262px;top:835px;width:413px;height:21px;background:#fff"></div>
<div class="t" style="left:264px;top:838.0px"><span style="letter-spacing:-0.206px;">255</span></div>
<div style="left:2px;top:856px;width:673px;height:20px;background:#f5f5f5"></div>
<svg class="ic" style="left:43.5px;top:857.5px" width="17" height="17" viewBox="0 0 17 17"><circle cx="8.5" cy="8.5" r="7.55" fill="#fdfdfd" stroke="#858585" stroke-width="1.15"/><path d="M5.7 6.7 C5.7 5.1 6.9 4.15 8.5 4.15 C10.1 4.15 11.3 5.05 11.3 6.45 C11.3 7.55 10.6 8.1 9.8 8.75 C9 9.4 8.55 9.85 8.55 11.1" fill="none" stroke="#787878" stroke-width="1.35"/><circle cx="8.55" cy="13.1" r="0.95" fill="#787878"/></svg>
<div class="t" style="left:66px;top:857.5px"><span style="letter-spacing:-0.167px;">Accept Matching Address in RX FIFO</span></div>
<svg class="ic" style="left:262px;top:859.0px" width="13" height="13" viewBox="0 0 13 13"><rect x="0.5" y="0.5" width="12" height="12" rx="2.1" fill="#f3f3f3" stroke="#5f5f5f" stroke-width="1"/></svg>
<svg class="ic" style="left:6px;top:882.3px" width="10" height="6" viewBox="0 0 10 6"><path d="M0.6 0.6 L4.7 4.7 L8.8 0.6" fill="none" stroke="#1f1f1f" stroke-width="1.05"/></svg>
<div class="t" style="left:24px;top:876.5px"><span style="letter-spacing:-0.133px;">Advanced</span></div>
<div style="left:2px;top:894px;width:673px;height:20px;background:#f5f5f5"></div>
<svg class="ic" style="left:43.5px;top:895.5px" width="17" height="17" viewBox="0 0 17 17"><circle cx="8.5" cy="8.5" r="7.55" fill="#fdfdfd" stroke="#858585" stroke-width="1.15"/><path d="M5.7 6.7 C5.7 5.1 6.9 4.15 8.5 4.15 C10.1 4.15 11.3 5.05 11.3 6.45 C11.3 7.55 10.6 8.1 9.8 8.75 C9 9.4 8.55 9.85 8.55 11.1" fill="none" stroke="#787878" stroke-width="1.35"/><circle cx="8.55" cy="13.1" r="0.95" fill="#787878"/></svg>
<div class="t" style="left:66px;top:895.5px"><span style="letter-spacing:-0.103px;">Drop on Frame Error</span></div>
<svg class="ic" style="left:262px;top:897.0px" width="13" height="13" viewBox="0 0 13 13"><rect x="0.5" y="0.5" width="12" height="12" rx="2.1" fill="#f3f3f3" stroke="#5f5f5f" stroke-width="1"/></svg>
<svg class="ic" style="left:43.5px;top:915.5px" width="17" height="17" viewBox="0 0 17 17"><circle cx="8.5" cy="8.5" r="7.55" fill="#fdfdfd" stroke="#858585" stroke-width="1.15"/><path d="M5.7 6.7 C5.7 5.1 6.9 4.15 8.5 4.15 C10.1 4.15 11.3 5.05 11.3 6.45 C11.3 7.55 10.6 8.1 9.8 8.75 C9 9.4 8.55 9.85 8.55 11.1" fill="none" stroke="#787878" stroke-width="1.35"/><circle cx="8.55" cy="13.1" r="0.95" fill="#787878"/></svg>
<div class="t" style="left:66px;top:915.5px"><span style="letter-spacing:-0.048px;">Drop on Parity Error</span></div>
<svg class="ic" style="left:262px;top:917.0px" width="13" height="13" viewBox="0 0 13 13"><rect x="0.5" y="0.5" width="12" height="12" rx="2.1" fill="#f3f3f3" stroke="#5f5f5f" stroke-width="1"/></svg>
<div style="left:2px;top:934px;width:673px;height:21px;background:#f5f5f5"></div>
<svg class="ic" style="left:43.5px;top:936.0px" width="17" height="17" viewBox="0 0 17 17"><circle cx="8.5" cy="8.5" r="7.55" fill="#fdfdfd" stroke="#858585" stroke-width="1.15"/><path d="M5.7 6.7 C5.7 5.1 6.9 4.15 8.5 4.15 C10.1 4.15 11.3 5.05 11.3 6.45 C11.3 7.55 10.6 8.1 9.8 8.75 C9 9.4 8.55 9.85 8.55 11.1" fill="none" stroke="#787878" stroke-width="1.35"/><circle cx="8.55" cy="13.1" r="0.95" fill="#787878"/></svg>
<div class="t" style="left:66px;top:936.0px"><span style="letter-spacing:-0.255px;">Break Signal Bits</span></div>
<div style="left:262px;top:934px;width:413px;height:21px;background:#fff"></div>
<div class="t" style="left:264px;top:937.0px"><span style="letter-spacing:0.239px;">11</span></div>
<svg class="ic" style="left:43.5px;top:957.0px" width="17" height="17" viewBox="0 0 17 17"><circle cx="8.5" cy="8.5" r="7.55" fill="#fdfdfd" stroke="#858585" stroke-width="1.15"/><path d="M5.7 6.7 C5.7 5.1 6.9 4.15 8.5 4.15 C10.1 4.15 11.3 5.05 11.3 6.45 C11.3 7.55 10.6 8.1 9.8 8.75 C9 9.4 8.55 9.85 8.55 11.1" fill="none" stroke="#787878" stroke-width="1.35"/><circle cx="8.55" cy="13.1" r="0.95" fill="#787878"/></svg>
<div class="t" style="left:66px;top:957.0px"><span style="letter-spacing:-0.348px;">Break Level</span></div>
<div class="combo" style="left:262px;top:955px;width:412px;height:21px"></div>
<div class="t" style="left:266px;top:957.0px"><span style="letter-spacing:-0.168px;">Low Level Pulse Detection</span></div>
<svg class="ic" style="left:661.4px;top:963.4px" width="10" height="6" viewBox="0 0 10 6"><path d="M0.8 0.6 L4.6 4.4 L8.4 0.6" fill="none" stroke="#5e5e5e" stroke-width="1.05"/></svg>
<div style="left:2px;top:976px;width:673px;height:20px;background:#f5f5f5"></div>
<svg class="ic" style="left:43.5px;top:977.5px" width="17" height="17" viewBox="0 0 17 17"><circle cx="8.5" cy="8.5" r="7.55" fill="#fdfdfd" stroke="#858585" stroke-width="1.15"/><path d="M5.7 6.7 C5.7 5.1 6.9 4.15 8.5 4.15 C10.1 4.15 11.3 5.05 11.3 6.45 C11.3 7.55 10.6 8.1 9.8 8.75 C9 9.4 8.55 9.85 8.55 11.1" fill="none" stroke="#787878" stroke-width="1.35"/><circle cx="8.55" cy="13.1" r="0.95" fill="#787878"/></svg>
<div class="t" style="left:66px;top:977.5px"><span style="letter-spacing:-0.138px;">Store Config in Flash</span></div>
<svg class="ic" style="left:262px;top:979.0px" width="13" height="13" viewBox="0 0 13 13"><rect x="0" y="0" width="13" height="13" rx="2.6" fill="#0560c0"/><path d="M3.9 6.9 L5.4 8.3 L8.9 5.1" fill="none" stroke="#fff" stroke-width="0.9"/></svg>
<svg class="ic" style="left:6px;top:1002.3px" width="10" height="6" viewBox="0 0 10 6"><path d="M0.6 0.6 L4.7 4.7 L8.8 0.6" fill="none" stroke="#1f1f1f" stroke-width="1.05"/></svg>
<div class="t" style="left:24px;top:996.5px"><span style="letter-spacing:-0.077px;">API Mode</span></div>
<div style="left:2px;top:1014px;width:673px;height:21px;background:#f5f5f5"></div>
<svg class="ic" style="left:43.5px;top:1016.0px" width="17" height="17" viewBox="0 0 17 17"><circle cx="8.5" cy="8.5" r="7.55" fill="#fdfdfd" stroke="#858585" stroke-width="1.15"/><path d="M5.7 6.7 C5.7 5.1 6.9 4.15 8.5 4.15 C10.1 4.15 11.3 5.05 11.3 6.45 C11.3 7.55 10.6 8.1 9.8 8.75 C9 9.4 8.55 9.85 8.55 11.1" fill="none" stroke="#787878" stroke-width="1.35"/><circle cx="8.55" cy="13.1" r="0.95" fill="#787878"/></svg>
<div class="t" style="left:66px;top:1016.0px"><span style="letter-spacing:-0.077px;">API Mode</span></div>
<div class="combo" style="left:262px;top:1014px;width:412px;height:21px"></div>
<div class="t" style="left:266px;top:1016.0px"><span style="letter-spacing:-0.130px;">High Level</span></div>
<svg class="ic" style="left:661.4px;top:1022.4px" width="10" height="6" viewBox="0 0 10 6"><path d="M0.8 0.6 L4.6 4.4 L8.4 0.6" fill="none" stroke="#5e5e5e" stroke-width="1.05"/></svg>
<div class="ann" style="left:114.8px;top:503.6px">2.1</div>
<div style="left:681px;top:22px;width:981px;height:1032px;background:#f9f9f9;border-top:1px solid #e5e5e5;border-left:1px solid #ededed"></div>
<div style="left:681px;top:0;width:124px;height:23px;background:#f9f9f9;border-left:1px solid #e5e5e5;border-right:1px solid #e5e5e5"></div>
<div class="t" style="left:692px;top:3px"><span style="letter-spacing:-0.684px;">PSC3M5FDS2AFQ1</span></div>
<div style="left:682px;top:47px;width:980px;height:1px;background:#e5e5e5"></div>
<div style="left:683px;top:24px;width:83px;height:25px;background:#f9f9f9;border:1px solid #e5e5e5;border-bottom:none;border-radius:3px 3px 0 0"></div>
<div class="t" style="left:695.268px;top:28px"><span style="letter-spacing:-0.203px;">Peripherals</span></div>
<div style="left:766px;top:26px;width:60px;height:21px;background:#f3f3f3;border:1px solid #e5e5e5;border-bottom:none;border-left:none;border-radius:0 2px 0 0"></div>
<div class="t" style="left:777.19px;top:28.6px"><span style="letter-spacing:0.042px;">Analog</span></div>
<div style="left:826px;top:26px;width:46px;height:21px;background:#f3f3f3;border:1px solid #e5e5e5;border-bottom:none;border-left:none;border-radius:0 2px 0 0"></div>
<div class="t" style="left:838.254px;top:28.6px"><span style="letter-spacing:-0.463px;">Pins</span></div>
<div style="left:872px;top:26px;width:58px;height:21px;background:#f3f3f3;border:1px solid #e5e5e5;border-bottom:none;border-left:none;border-radius:0 2px 0 0"></div>
<div class="t" style="left:884.02px;top:28.6px"><span style="letter-spacing:-0.341px;">Clocks</span></div>
<div style="left:930px;top:26px;width:62px;height:21px;background:#f3f3f3;border:1px solid #e5e5e5;border-bottom:none;border-left:none;border-radius:0 2px 0 0"></div>
<div class="t" style="left:942.052px;top:28.6px"><span style="letter-spacing:-0.352px;">System</span></div>
<div style="left:992px;top:26px;width:69px;height:21px;background:#f3f3f3;border:1px solid #e5e5e5;border-bottom:none;border-left:none;border-radius:0 2px 0 0"></div>
<div class="t" style="left:1004.324px;top:28.6px"><span style="letter-spacing:0.169px;">Memory</span></div>
<div style="left:1061px;top:26px;width:49px;height:21px;background:#f3f3f3;border:1px solid #e5e5e5;border-bottom:none;border-left:none;border-radius:0 2px 0 0"></div>
<div class="t" style="left:1072.03px;top:28.6px"><span style="letter-spacing:0.091px;">DMA</span></div>
<div class="inp" style="left:686px;top:51px;width:829px;height:24px"></div>
<div class="t" style="left:689px;top:55px;color:#8a8a8a"><span style="letter-spacing:-0.080px;">Enter filter text...</span></div>
<svg class="ic" style="left:1494px;top:55.5px" width="16" height="15" viewBox="0 0 16 15"><path d="M6.4 0.9 H12 L12.8 1.8 L7.2 14 H0.6 V12.2 Z" fill="#fbf8f5" stroke="#a8946e" stroke-width="1"/><path d="M3.4 7.6 H9.9 L7.2 14 H0.6 V12.2 Z" fill="#dfd0bf" stroke="#a8946e" stroke-width="0.9"/><path d="M7.2 14 H15.2" stroke="#9c8a66" stroke-width="1"/></svg>
<svg class="ic" style="left:1518px;top:56px" width="16" height="15" viewBox="0 0 16 15"><defs><linearGradient id="fg1518" x1="0" x2="1"><stop offset="0" stop-color="#6e6e6e"/><stop offset="0.3" stop-color="#f4f4f4"/><stop offset="0.5" stop-color="#fafafa"/><stop offset="0.68" stop-color="#1e1e1e"/><stop offset="1" stop-color="#777"/></linearGradient></defs><path d="M0.4 1.0 H15.6 L10 7.6 V13 L7 14.8 L5.4 7.6 Z" fill="url(#fg1518)" stroke="#6a6a6a" stroke-width="0.6"/><path d="M0.4 1.2 H15.6" stroke="#444" stroke-width="1.2"/></svg>
<svg class="ic" style="left:1543px;top:56.6px" width="14" height="14" viewBox="0 0 14 14"><defs><linearGradient id="cg1543" x1="0" y1="0" x2="0" y2="1"><stop offset="0" stop-color="#bfe5ff"/><stop offset="0.45" stop-color="#f2faff"/><stop offset="1" stop-color="#ffffff"/></linearGradient></defs><rect x="0.6" y="0.6" width="10" height="9.8" fill="#c6e7ff" stroke="#a0a8c4" stroke-width="1"/><rect x="2.7" y="2.6" width="10" height="10.1" fill="url(#cg1543)" stroke="#838cab" stroke-width="1"/><path d="M4 7.5 H11" stroke="#0b3d78" stroke-width="1.25" stroke-linecap="round"/></svg>
<svg class="ic" style="left:1566px;top:56.6px" width="14" height="14" viewBox="0 0 14 14"><defs><linearGradient id="cg1566" x1="0" y1="0" x2="0" y2="1"><stop offset="0" stop-color="#bfe5ff"/><stop offset="0.45" stop-color="#f2faff"/><stop offset="1" stop-color="#ffffff"/></linearGradient></defs><rect x="0.6" y="0.6" width="10" height="9.8" fill="#c6e7ff" stroke="#a0a8c4" stroke-width="1"/><rect x="2.7" y="2.6" width="10" height="10.1" fill="url(#cg1566)" stroke="#838cab" stroke-width="1"/><path d="M4 7.5 H11" stroke="#0b3d78" stroke-width="1.25" stroke-linecap="round"/><path d="M7.5 4.1 V10.9" stroke="#0b3d78" stroke-width="1.25" stroke-linecap="round"/></svg>
<div style="left:1586px;top:54px;width:1px;height:18px;background:#cfcfcf"></div>
<svg class="ic" style="left:1594.4px;top:54.8px" width="14" height="17" viewBox="0 0 14 17"><g fill="none" stroke-linecap="round"><path d="M7.3 0.6 L7.7 8.6" stroke="#8fb0dc" stroke-width="1.3"/><path d="M13 2.6 L8 8.2" stroke="#8aa2c4" stroke-width="1.3"/><path d="M7.6 8.4 C6 8.6 4.4 9.2 3.2 10" stroke="#3f7fe6" stroke-width="1.5"/><ellipse cx="2.9" cy="11.2" rx="2" ry="1.45" transform="rotate(-30 2.9 11.2)" stroke="#3f7fe6" stroke-width="1.3"/><path d="M7.7 8.6 C8 9.8 8.4 10.8 9 11.6" stroke="#2142b2" stroke-width="1.6"/><ellipse cx="9.6" cy="13.6" rx="1.7" ry="2.2" transform="rotate(-15 9.6 13.6)" stroke="#2142b2" stroke-width="1.4"/></g></svg>
<svg class="ic" style="left:1615.8px;top:54.8px" width="16" height="17" viewBox="0 0 16 17"><path d="M1.5 0.6 H7.4 L10 3.2 V13.6 H1.5 Z" fill="#fff" stroke="#9c9c9c" stroke-width="1"/><path d="M3.2 6.4 H4.4 M3.2 8.4 H4.4 M3.2 10.4 H4.4" stroke="#2e55c0" stroke-width="1"/><path d="M4.8 2.7 H10.6 L14.6 6.6 V15.8 H4.8 Z" fill="#fff" stroke="#8c8c8c" stroke-width="1"/><path d="M10.6 2.9 V6.6 H14.4" fill="none" stroke="#a5a5a5" stroke-width="0.9"/><path d="M15.1 7 V16.3 H5.4" fill="none" stroke="#bdbdbd" stroke-width="0.8"/><path d="M6.4 8.4 H13.2 M6.4 10.5 H13.2 M6.4 12.6 H13.2" stroke="#2344b0" stroke-width="1.15"/></svg>
<svg class="ic" style="left:1637.9px;top:54.8px" width="16" height="17" viewBox="0 0 16 17"><rect x="0.7" y="1.6" width="9.4" height="11.4" fill="#cdcdcd" stroke="#a2a2a2" stroke-width="1"/><rect x="3.4" y="0.5" width="4" height="2.6" rx="0.8" fill="#bdbdbd" stroke="#9a9a9a" stroke-width="0.9"/><path d="M6 5.2 H12 L15.4 8.4 V15.8 H6 Z" fill="#f6f6f6" stroke="#b4b4b4" stroke-width="1"/><path d="M12 5.4 V8.4 H15.2" fill="none" stroke="#c4c4c4" stroke-width="0.8"/><path d="M7.6 9.2 H12.8 M7.6 11.2 H13.6 M7.6 13.2 H13.6" stroke="#d2d2d2" stroke-width="0.9"/></svg>
<div class="tree" style="left:684px;top:77px;width:977px;height:990px"></div>
<div class="t" style="left:689px;top:82px"><span style="letter-spacing:-0.376px;">Resource</span></div>
<div class="t" style="left:1038px;top:82px"><span style="letter-spacing:-0.284px;">Name(s)</span></div>
<div class="t" style="left:1185px;top:82px"><span style="letter-spacing:-0.139px;">Personality</span></div>
<div class="sep" style="left:1033px;top:78px;height:24px"></div>
<div class="sep" style="left:1180px;top:78px;height:24px"></div>
<div class="sep" style="left:1255px;top:78px;height:24px"></div>
<svg class="ic" style="left:690px;top:108.3px" width="10" height="6" viewBox="0 0 10 6"><path d="M0.6 0.6 L4.7 4.7 L8.8 0.6" fill="none" stroke="#1f1f1f" stroke-width="1.05"/></svg>
<div class="t" style="left:708px;top:102.5px"><span style="letter-spacing:0.049px;">Communication</span></div>
<div style="left:686px;top:120px;width:974px;height:18px;background:#f5f5f5"></div>
<svg class="ic" style="left:712px;top:124.0px" width="7" height="10" viewBox="0 0 7 10"><path d="M0.9 0.7 L5.2 5 L0.9 9.3" fill="none" stroke="#8c8c8c" stroke-width="1.1"/></svg>
<div class="t" style="left:728px;top:120.5px"><span style="letter-spacing:-0.117px;">Controller Area Network FD (CAN FD) 0</span></div>
<svg class="ic" style="left:728px;top:142.0px" width="13" height="13" viewBox="0 0 13 13"><rect x="0" y="0" width="13" height="13" rx="2.6" fill="#0560c0"/><path d="M3.9 6.9 L5.4 8.3 L8.9 5.1" fill="none" stroke="#fff" stroke-width="0.9"/></svg>
<div class="t" style="left:747px;top:140.0px"><span style="letter-spacing:-0.220px;">Serial Communication Block (SCB) 0</span></div>
<div style="left:1034px;top:138px;width:147px;height:21px;background:#fff"></div>
<div class="t" style="left:1036px;top:141.0px"><span style="letter-spacing:-0.774px;">PMBUS_I2C</span></div>
<div class="combo" style="left:1181px;top:138px;width:75px;height:21px;"></div>
<div class="t" style="left:1185px;top:140.0px"><span style="letter-spacing:-0.275px;">I2C-4.0</span></div>
<svg class="ic" style="left:1242.4px;top:146.4px" width="10" height="6" viewBox="0 0 10 6"><path d="M0.8 0.6 L4.6 4.4 L8.4 0.6" fill="none" stroke="#5e5e5e" stroke-width="1.05"/></svg>
<div style="left:686px;top:159px;width:974px;height:21px;background:#f5f5f5"></div>
<svg class="ic" style="left:728px;top:163.0px" width="13" height="13" viewBox="0 0 13 13"><rect x="0.5" y="0.5" width="12" height="12" rx="2.1" fill="#f3f3f3" stroke="#5f5f5f" stroke-width="1"/></svg>
<div class="t" style="left:747px;top:161.0px"><span style="letter-spacing:-0.220px;">Serial Communication Block (SCB) 1</span></div>
<div style="left:1034px;top:159px;width:147px;height:21px;background:#fff"></div>
<div class="t g" style="left:1036px;top:162.0px"><span style="letter-spacing:-0.577px;">scb_1</span></div>
<svg class="ic" style="left:728px;top:184.0px" width="13" height="13" viewBox="0 0 13 13"><rect x="0.5" y="0.5" width="12" height="12" rx="2.1" fill="#f3f3f3" stroke="#5f5f5f" stroke-width="1"/></svg>
<div class="t" style="left:747px;top:182.0px"><span style="letter-spacing:-0.220px;">Serial Communication Block (SCB) 2</span></div>
<div style="left:1034px;top:180px;width:147px;height:21px;background:#fff"></div>
<div class="t g" style="left:1036px;top:183.0px"><span style="letter-spacing:-0.577px;">scb_2</span></div>
<div style="left:725px;top:201px;width:309px;height:21px;background:#c5e0f7;border:1px solid #0a78d4;border-right:none;border-radius:2px 0 0 2px"></div>
<div style="left:1181px;top:201px;width:479px;height:21px;background:#c5e0f7;border:1px solid #0a78d4;border-left:none;border-radius:0 2px 2px 0"></div>
<svg class="ic" style="left:728px;top:205.0px" width="13" height="13" viewBox="0 0 13 13"><rect x="0" y="0" width="13" height="13" rx="2.6" fill="#0560c0"/><path d="M3.9 6.9 L5.4 8.3 L8.9 5.1" fill="none" stroke="#fff" stroke-width="0.9"/></svg>
<div class="t" style="left:747px;top:203.0px"><span style="letter-spacing:-0.220px;">Serial Communication Block (SCB) 3</span></div>
<div style="left:1034px;top:201px;width:147px;height:21px;background:#fff"></div>
<div class="t" style="left:1036px;top:204.0px"><span style="letter-spacing:-0.952px;">DEBUG_UART</span></div>
<div class="combo" style="left:1181px;top:201px;width:75px;height:21px;border-radius:0;border-color:#c8c8c8;border-left-color:#bdbdbd"></div>
<div class="t" style="left:1185px;top:203.0px"><span style="letter-spacing:-0.335px;">UART-3.0</span></div>
<svg class="ic" style="left:1242.4px;top:209.4px" width="10" height="6" viewBox="0 0 10 6"><path d="M0.8 0.6 L4.6 4.4 L8.4 0.6" fill="none" stroke="#5e5e5e" stroke-width="1.05"/></svg>
<div class="ann" style="left:1261.7px;top:200.4px;transform:scaleX(1.03)">2.0</div>
<svg class="ic" style="left:728px;top:226.0px" width="13" height="13" viewBox="0 0 13 13"><rect x="0.5" y="0.5" width="12" height="12" rx="2.1" fill="#f3f3f3" stroke="#5f5f5f" stroke-width="1"/></svg>
<div class="t" style="left:747px;top:224.0px"><span style="letter-spacing:-0.220px;">Serial Communication Block (SCB) 4</span></div>
<div style="left:1034px;top:222px;width:147px;height:21px;background:#fff"></div>
<div class="t g" style="left:1036px;top:225.0px"><span style="letter-spacing:-0.577px;">scb_4</span></div>
<div style="left:686px;top:243px;width:974px;height:21px;background:#f5f5f5"></div>
<svg class="ic" style="left:728px;top:247.0px" width="13" height="13" viewBox="0 0 13 13"><rect x="0.5" y="0.5" width="12" height="12" rx="2.1" fill="#f3f3f3" stroke="#5f5f5f" stroke-width="1"/></svg>
<div class="t" style="left:747px;top:245.0px"><span style="letter-spacing:-0.220px;">Serial Communication Block (SCB) 5</span></div>
<div style="left:1034px;top:243px;width:147px;height:21px;background:#fff"></div>
<div class="t g" style="left:1036px;top:246.0px"><span style="letter-spacing:-0.577px;">scb_5</span></div>
<svg class="ic" style="left:690px;top:270.3px" width="10" height="6" viewBox="0 0 10 6"><path d="M0.6 0.6 L4.7 4.7 L8.8 0.6" fill="none" stroke="#1f1f1f" stroke-width="1.05"/></svg>
<div class="t" style="left:708px;top:264.5px"><span style="letter-spacing:0.146px;">Digital</span></div>
<div style="left:686px;top:282px;width:974px;height:18px;background:#f5f5f5"></div>
<svg class="ic" style="left:710px;top:288.3px" width="10" height="6" viewBox="0 0 10 6"><path d="M0.6 0.6 L4.7 4.7 L8.8 0.6" fill="none" stroke="#1f1f1f" stroke-width="1.05"/></svg>
<div class="t" style="left:728px;top:282.5px"><span style="letter-spacing:-0.161px;">Timer, Counter, and PWM (TCPWM) 0</span></div>
<svg class="ic" style="left:730px;top:306.3px" width="10" height="6" viewBox="0 0 10 6"><path d="M0.6 0.6 L4.7 4.7 L8.8 0.6" fill="none" stroke="#1f1f1f" stroke-width="1.05"/></svg>
<div class="t" style="left:748px;top:300.5px"><span style="letter-spacing:-0.181px;">TCPWM[0] Group 0</span></div>
<div style="left:686px;top:318px;width:974px;height:21px;background:#f5f5f5"></div>
<svg class="ic" style="left:768px;top:322.0px" width="13" height="13" viewBox="0 0 13 13"><rect x="0.5" y="0.5" width="12" height="12" rx="2.1" fill="#f3f3f3" stroke="#5f5f5f" stroke-width="1"/></svg>
<div class="t" style="left:787px;top:320.0px"><span style="letter-spacing:-0.030px;">TCPWM[0] Group[0] 32-bit Counter 0</span></div>
<div style="left:1034px;top:318px;width:147px;height:21px;background:#fff"></div>
<div class="t g" style="left:1036px;top:321.0px"><span style="letter-spacing:-0.301px;">tcpwm_0_group_0_cnt_0</span></div>
<svg class="ic" style="left:768px;top:343.0px" width="13" height="13" viewBox="0 0 13 13"><rect x="0.5" y="0.5" width="12" height="12" rx="2.1" fill="#f3f3f3" stroke="#5f5f5f" stroke-width="1"/></svg>
<div class="t" style="left:787px;top:341.0px"><span style="letter-spacing:-0.030px;">TCPWM[0] Group[0] 32-bit Counter 1</span></div>
<div style="left:1034px;top:339px;width:147px;height:21px;background:#fff"></div>
<div class="t g" style="left:1036px;top:342.0px"><span style="letter-spacing:-0.301px;">tcpwm_0_group_0_cnt_1</span></div>
<div style="left:686px;top:360px;width:974px;height:21px;background:#f5f5f5"></div>
<svg class="ic" style="left:768px;top:364.0px" width="13" height="13" viewBox="0 0 13 13"><rect x="0.5" y="0.5" width="12" height="12" rx="2.1" fill="#f3f3f3" stroke="#5f5f5f" stroke-width="1"/></svg>
<div class="t" style="left:787px;top:362.0px"><span style="letter-spacing:-0.030px;">TCPWM[0] Group[0] 32-bit Counter 2</span></div>
<div style="left:1034px;top:360px;width:147px;height:21px;background:#fff"></div>
<div class="t g" style="left:1036px;top:363.0px"><span style="letter-spacing:-0.301px;">tcpwm_0_group_0_cnt_2</span></div>
<svg class="ic" style="left:768px;top:385.0px" width="13" height="13" viewBox="0 0 13 13"><rect x="0.5" y="0.5" width="12" height="12" rx="2.1" fill="#f3f3f3" stroke="#5f5f5f" stroke-width="1"/></svg>
<div class="t" style="left:787px;top:383.0px"><span style="letter-spacing:-0.030px;">TCPWM[0] Group[0] 32-bit Counter 3</span></div>
<div style="left:1034px;top:381px;width:147px;height:21px;background:#fff"></div>
<div class="t g" style="left:1036px;top:384.0px"><span style="letter-spacing:-0.301px;">tcpwm_0_group_0_cnt_3</span></div>
<div style="left:686px;top:402px;width:974px;height:18px;background:#f5f5f5"></div>
<svg class="ic" style="left:730px;top:408.3px" width="10" height="6" viewBox="0 0 10 6"><path d="M0.6 0.6 L4.7 4.7 L8.8 0.6" fill="none" stroke="#1f1f1f" stroke-width="1.05"/></svg>
<div class="t" style="left:748px;top:402.5px"><span style="letter-spacing:-0.181px;">TCPWM[0] Group 1</span></div>
<svg class="ic" style="left:768px;top:424.0px" width="13" height="13" viewBox="0 0 13 13"><rect x="0.5" y="0.5" width="12" height="12" rx="2.1" fill="#f3f3f3" stroke="#5f5f5f" stroke-width="1"/></svg>
<div class="t" style="left:787px;top:422.0px"><span style="letter-spacing:-0.030px;">TCPWM[0] Group[1] 16-bit Counter 0</span></div>
<div style="left:1034px;top:420px;width:147px;height:21px;background:#fff"></div>
<div class="t g" style="left:1036px;top:423.0px"><span style="letter-spacing:-0.301px;">tcpwm_0_group_1_cnt_0</span></div>
<div style="left:686px;top:441px;width:974px;height:21px;background:#f5f5f5"></div>
<svg class="ic" style="left:768px;top:445.0px" width="13" height="13" viewBox="0 0 13 13"><rect x="0.5" y="0.5" width="12" height="12" rx="2.1" fill="#f3f3f3" stroke="#5f5f5f" stroke-width="1"/></svg>
<div class="t" style="left:787px;top:443.0px"><span style="letter-spacing:-0.030px;">TCPWM[0] Group[1] 16-bit Counter 1</span></div>
<div style="left:1034px;top:441px;width:147px;height:21px;background:#fff"></div>
<div class="t g" style="left:1036px;top:444.0px"><span style="letter-spacing:-0.301px;">tcpwm_0_group_1_cnt_1</span></div>
<svg class="ic" style="left:768px;top:466.0px" width="13" height="13" viewBox="0 0 13 13"><rect x="0.5" y="0.5" width="12" height="12" rx="2.1" fill="#f3f3f3" stroke="#5f5f5f" stroke-width="1"/></svg>
<div class="t" style="left:787px;top:464.0px"><span style="letter-spacing:-0.030px;">TCPWM[0] Group[1] 16-bit Counter 2</span></div>
<div style="left:1034px;top:462px;width:147px;height:21px;background:#fff"></div>
<div class="t g" style="left:1036px;top:465.0px"><span style="letter-spacing:-0.301px;">tcpwm_0_group_1_cnt_2</span></div>
<div style="left:686px;top:483px;width:974px;height:21px;background:#f5f5f5"></div>
<svg class="ic" style="left:768px;top:487.0px" width="13" height="13" viewBox="0 0 13 13"><rect x="0.5" y="0.5" width="12" height="12" rx="2.1" fill="#f3f3f3" stroke="#5f5f5f" stroke-width="1"/></svg>
<div class="t" style="left:787px;top:485.0px"><span style="letter-spacing:-0.030px;">TCPWM[0] Group[1] 16-bit Counter 3</span></div>
<div style="left:1034px;top:483px;width:147px;height:21px;background:#fff"></div>
<div class="t g" style="left:1036px;top:486.0px"><span style="letter-spacing:-0.301px;">tcpwm_0_group_1_cnt_3</span></div>
<svg class="ic" style="left:768px;top:508.0px" width="13" height="13" viewBox="0 0 13 13"><rect x="0.5" y="0.5" width="12" height="12" rx="2.1" fill="#f3f3f3" stroke="#5f5f5f" stroke-width="1"/></svg>
<div class="t" style="left:787px;top:506.0px"><span style="letter-spacing:-0.030px;">TCPWM[0] Group[1] 16-bit Counter 4</span></div>
<div style="left:1034px;top:504px;width:147px;height:21px;background:#fff"></div>
<div class="t g" style="left:1036px;top:507.0px"><span style="letter-spacing:-0.301px;">tcpwm_0_group_1_cnt_4</span></div>
<div style="left:686px;top:525px;width:974px;height:21px;background:#f5f5f5"></div>
<svg class="ic" style="left:768px;top:529.0px" width="13" height="13" viewBox="0 0 13 13"><rect x="0.5" y="0.5" width="12" height="12" rx="2.1" fill="#f3f3f3" stroke="#5f5f5f" stroke-width="1"/></svg>
<div class="t" style="left:787px;top:527.0px"><span style="letter-spacing:-0.030px;">TCPWM[0] Group[1] 16-bit Counter 5</span></div>
<div style="left:1034px;top:525px;width:147px;height:21px;background:#fff"></div>
<div class="t g" style="left:1036px;top:528.0px"><span style="letter-spacing:-0.301px;">tcpwm_0_group_1_cnt_5</span></div>
<svg class="ic" style="left:768px;top:550.0px" width="13" height="13" viewBox="0 0 13 13"><rect x="0.5" y="0.5" width="12" height="12" rx="2.1" fill="#f3f3f3" stroke="#5f5f5f" stroke-width="1"/></svg>
<div class="t" style="left:787px;top:548.0px"><span style="letter-spacing:-0.030px;">TCPWM[0] Group[1] 16-bit Counter 6</span></div>
<div style="left:1034px;top:546px;width:147px;height:21px;background:#fff"></div>
<div class="t g" style="left:1036px;top:549.0px"><span style="letter-spacing:-0.301px;">tcpwm_0_group_1_cnt_6</span></div>
<div style="left:686px;top:567px;width:974px;height:21px;background:#f5f5f5"></div>
<svg class="ic" style="left:768px;top:571.0px" width="13" height="13" viewBox="0 0 13 13"><rect x="0.5" y="0.5" width="12" height="12" rx="2.1" fill="#f3f3f3" stroke="#5f5f5f" stroke-width="1"/></svg>
<div class="t" style="left:787px;top:569.0px"><span style="letter-spacing:-0.030px;">TCPWM[0] Group[1] 16-bit Counter 7</span></div>
<div style="left:1034px;top:567px;width:147px;height:21px;background:#fff"></div>
<div class="t g" style="left:1036px;top:570.0px"><span style="letter-spacing:-0.301px;">tcpwm_0_group_1_cnt_7</span></div>
<svg class="ic" style="left:768px;top:592.0px" width="13" height="13" viewBox="0 0 13 13"><rect x="0.5" y="0.5" width="12" height="12" rx="2.1" fill="#f3f3f3" stroke="#5f5f5f" stroke-width="1"/></svg>
<div class="t" style="left:787px;top:590.0px"><span style="letter-spacing:-0.001px;">TCPWM[0] Group[1] Motif 0</span></div>
<div style="left:1034px;top:588px;width:147px;height:21px;background:#fff"></div>
<div class="t g" style="left:1036px;top:591.0px"><span style="letter-spacing:-0.201px;">tcpwm_0_group_1_motif_0</span></div>
<div style="left:686px;top:609px;width:974px;height:18px;background:#f5f5f5"></div>
<svg class="ic" style="left:732px;top:613.0px" width="7" height="10" viewBox="0 0 7 10"><path d="M0.9 0.7 L5.2 5 L0.9 9.3" fill="none" stroke="#8c8c8c" stroke-width="1.1"/></svg>
<div class="t" style="left:748px;top:609.5px"><span style="letter-spacing:-0.181px;">TCPWM[0] Group 2</span></div>
<svg class="ic" style="left:690px;top:633.3px" width="10" height="6" viewBox="0 0 10 6"><path d="M0.6 0.6 L4.7 4.7 L8.8 0.6" fill="none" stroke="#1f1f1f" stroke-width="1.05"/></svg>
<div class="t" style="left:708px;top:627.5px"><span style="letter-spacing:-0.352px;">System</span></div>
<div style="left:686px;top:645px;width:974px;height:18px;background:#f5f5f5"></div>
<svg class="ic" style="left:710px;top:651.3px" width="10" height="6" viewBox="0 0 10 6"><path d="M0.6 0.6 L4.7 4.7 L8.8 0.6" fill="none" stroke="#1f1f1f" stroke-width="1.05"/></svg>
<div class="t" style="left:728px;top:645.5px"><span style="letter-spacing:0.264px;">Math</span></div>
<svg class="ic" style="left:748px;top:667.0px" width="13" height="13" viewBox="0 0 13 13"><rect x="0.5" y="0.5" width="12" height="12" rx="2.1" fill="#f3f3f3" stroke="#5f5f5f" stroke-width="1"/></svg>
<div class="t" style="left:767px;top:665.0px"><span style="letter-spacing:-0.079px;">Coordinate Rotation Digital Computer (CORDIC) 0</span></div>
<div style="left:1034px;top:663px;width:147px;height:21px;background:#fff"></div>
<div class="t g" style="left:1036px;top:666.0px"><span style="letter-spacing:-0.207px;">cordic_0</span></div>
<div style="left:686px;top:684px;width:974px;height:21px;background:#f5f5f5"></div>
<svg class="ic" style="left:728px;top:688.0px" width="13" height="13" viewBox="0 0 13 13"><rect x="0.5" y="0.5" width="12" height="12" rx="2.1" fill="#f3f3f3" stroke="#5f5f5f" stroke-width="1"/></svg>
<div class="t" style="left:747px;top:686.0px"><span style="letter-spacing:0.027px;">Multi-Counter Watchdog Timer (MCWDT) 0</span></div>
<div style="left:1034px;top:684px;width:147px;height:21px;background:#fff"></div>
<div class="t g" style="left:1036px;top:687.0px"><span style="letter-spacing:-0.505px;">srss_0_mcwdt_0</span></div>
</body></html>
